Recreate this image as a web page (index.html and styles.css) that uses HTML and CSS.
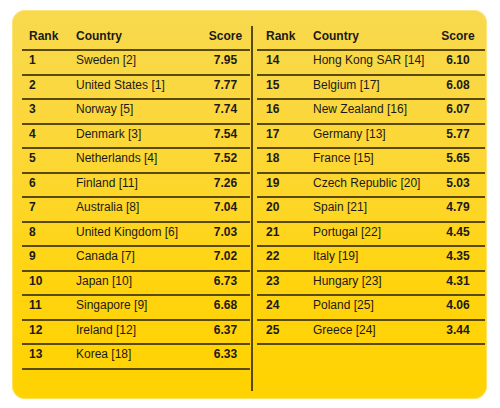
FILE: index.html
```html
<!DOCTYPE html>
<html>
<head>
<meta charset="utf-8">
<link rel="stylesheet" href="styles.css">
</head>
<body>
<div class="panel">
  <div class="table left">
    <div class="row head"><span>Rank</span><span>Country</span><span class="score">Score</span></div>
    <div class="row"><span class="rk">1</span><span>Sweden [2]</span><span class="score">7.95</span></div>
    <div class="row"><span class="rk">2</span><span>United States [1]</span><span class="score">7.77</span></div>
    <div class="row"><span class="rk">3</span><span>Norway [5]</span><span class="score">7.74</span></div>
    <div class="row"><span class="rk">4</span><span>Denmark [3]</span><span class="score">7.54</span></div>
    <div class="row"><span class="rk">5</span><span>Netherlands [4]</span><span class="score">7.52</span></div>
    <div class="row"><span class="rk">6</span><span>Finland [11]</span><span class="score">7.26</span></div>
    <div class="row"><span class="rk">7</span><span>Australia [8]</span><span class="score">7.04</span></div>
    <div class="row"><span class="rk">8</span><span>United Kingdom [6]</span><span class="score">7.03</span></div>
    <div class="row"><span class="rk">9</span><span>Canada [7]</span><span class="score">7.02</span></div>
    <div class="row"><span class="rk">10</span><span>Japan [10]</span><span class="score">6.73</span></div>
    <div class="row"><span class="rk">11</span><span>Singapore [9]</span><span class="score">6.68</span></div>
    <div class="row"><span class="rk">12</span><span>Ireland [12]</span><span class="score">6.37</span></div>
    <div class="row"><span class="rk">13</span><span>Korea [18]</span><span class="score">6.33</span></div>
  </div>
  <div class="divider"></div>
  <div class="table right">
    <div class="row head"><span>Rank</span><span>Country</span><span class="score">Score</span></div>
    <div class="row"><span class="rk">14</span><span>Hong Kong SAR [14]</span><span class="score">6.10</span></div>
    <div class="row"><span class="rk">15</span><span>Belgium [17]</span><span class="score">6.08</span></div>
    <div class="row"><span class="rk">16</span><span>New Zealand [16]</span><span class="score">6.07</span></div>
    <div class="row"><span class="rk">17</span><span>Germany [13]</span><span class="score">5.77</span></div>
    <div class="row"><span class="rk">18</span><span>France [15]</span><span class="score">5.65</span></div>
    <div class="row"><span class="rk">19</span><span>Czech Republic [20]</span><span class="score">5.03</span></div>
    <div class="row"><span class="rk">20</span><span>Spain [21]</span><span class="score">4.79</span></div>
    <div class="row"><span class="rk">21</span><span>Portugal [22]</span><span class="score">4.45</span></div>
    <div class="row"><span class="rk">22</span><span>Italy [19]</span><span class="score">4.35</span></div>
    <div class="row"><span class="rk">23</span><span>Hungary [23]</span><span class="score">4.31</span></div>
    <div class="row"><span class="rk">24</span><span>Poland [25]</span><span class="score">4.06</span></div>
    <div class="row"><span class="rk">25</span><span>Greece [24]</span><span class="score">3.44</span></div>
  </div>
</div>
</body>
</html>
```

FILE: styles.css
```css
html, body {
  margin: 0;
  padding: 0;
  background: #ffffff;
}
body {
  font-family: "Liberation Sans", Arial, sans-serif;
  font-size: 12px;
  color: #1a1a1a;
}
.panel {
  box-sizing: border-box;
  margin: 10px 0 0 12px;
  width: 475px;
  height: 389px;
  border-radius: 13px;
  background: linear-gradient(180deg, #f8d94e 0%, #fcd737 35%, #ffd40f 70%, #ffd200 100%);
  box-shadow: inset 0 0 0 1px rgba(255, 236, 150, 0.6);
  padding: 17px 2px 0 10px;
  display: flex;
  align-items: flex-start;
}
.table {
  display: flex;
  flex-direction: column;
}
.table.left {
  width: 228px;
}
.table.right {
  width: 228px;
  margin-left: 4px;
}
.divider {
  width: 2px;
  height: 365px;
  margin-top: -1px;
  margin-left: 1px;
  background: #5a4a08;
}
.row {
  display: grid;
  grid-template-columns: 47px 1fr 48px;
  line-height: 18px;
  height: 18px;
  padding-bottom: 4.5px;
  border-bottom: 2px solid #5a4a08;
  padding-left: 7px;
}
.right .row {
  padding-left: 9px;
  grid-template-columns: 47px 1fr 52px;
  padding-right: 1px;
}
.row.head {
  font-weight: bold;
  padding-bottom: 4px;
}
.rk {
  font-weight: bold;
}
.score {
  font-weight: bold;
  text-align: center;
}
.left .score {
  padding-right: 1px;
}
```
